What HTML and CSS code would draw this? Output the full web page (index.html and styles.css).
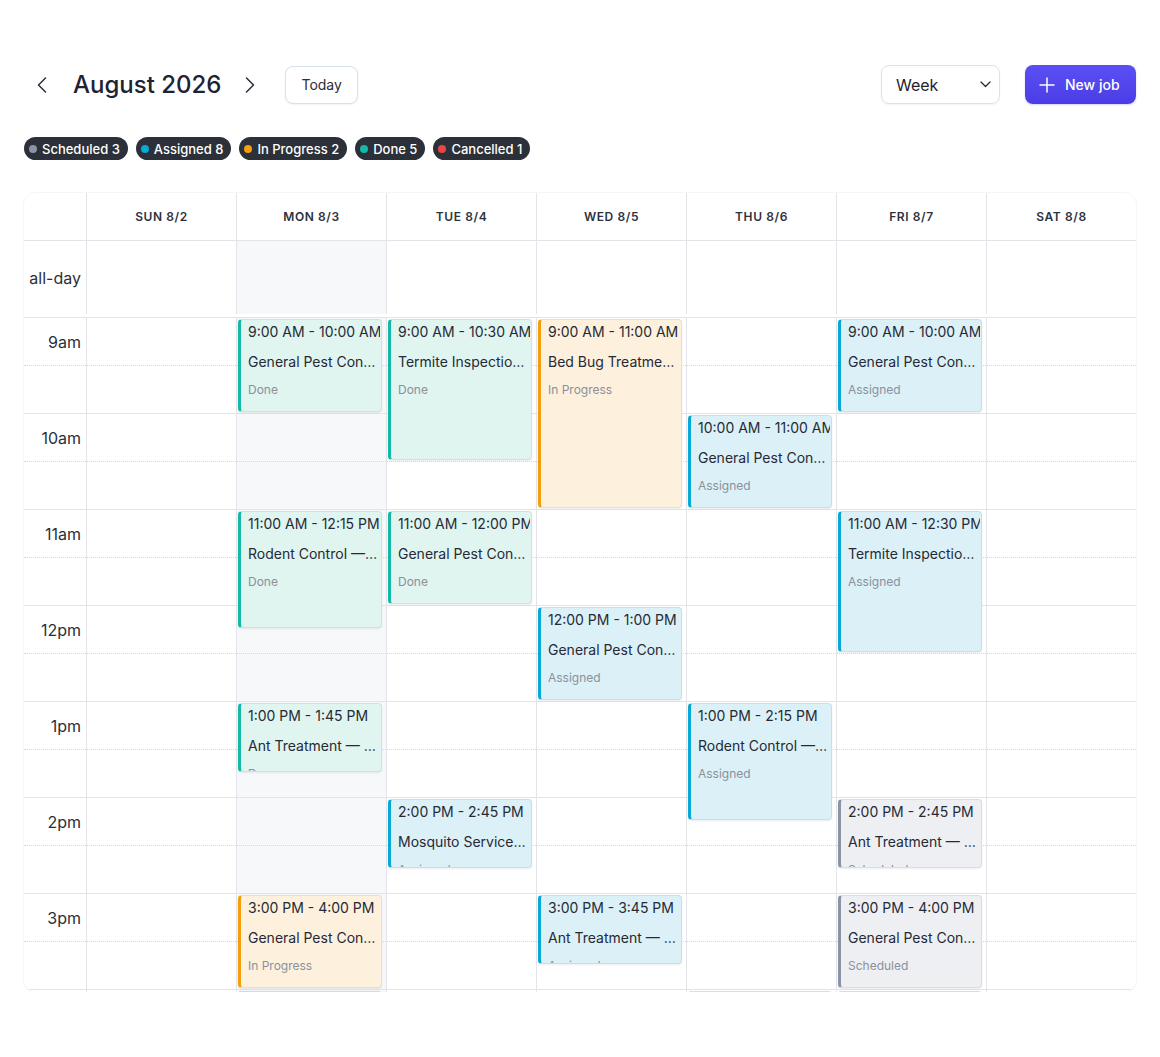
FILE: index.html
```html
<!DOCTYPE html>
<html lang="en">
<head>
  <meta charset="UTF-8" />
  <meta name="viewport" content="width=device-width, initial-scale=1.0"/>
  <title>Jobs Calendar</title>
  <link rel="stylesheet" href="styles.css">
</head>
<body>
  <div class="page">
    <div class="toolbar">
      <div class="nav">
        <button class="icon-btn prev" aria-label="Previous week">
          <svg width="16" height="16" viewBox="0 0 16 16"><path d="M10.5 1 L3.5 8 L10.5 15" fill="none" stroke="currentColor" stroke-width="1.5" stroke-linecap="round" stroke-linejoin="round"/></svg>
        </button>
        <h1 class="title">August 2026</h1>
        <button class="icon-btn next" aria-label="Next week">
          <svg width="16" height="16" viewBox="0 0 16 16"><path d="M5.5 1 L12.5 8 L5.5 15" fill="none" stroke="currentColor" stroke-width="1.5" stroke-linecap="round" stroke-linejoin="round"/></svg>
        </button>
        <button class="today-btn">Today</button>
      </div>
      <div class="actions">
        <div class="view-select">
          <span>Week</span>
          <svg width="11" height="7" viewBox="0 0 11 7"><path d="M1 1 L5.5 5.5 L10 1" fill="none" stroke="currentColor" stroke-width="1.2" stroke-linecap="round" stroke-linejoin="round"/></svg>
        </div>
        <button class="new-job">
          <svg width="16" height="16" viewBox="0 0 16 16"><path d="M8 1 V15 M1 8 H15" fill="none" stroke="currentColor" stroke-width="1.5" stroke-linecap="round"/></svg>
          New job
        </button>
      </div>
    </div>

    <div class="legend">
      <span class="chip"><span class="dot scheduled"></span>Scheduled 3</span>
      <span class="chip"><span class="dot assigned"></span>Assigned 8</span>
      <span class="chip"><span class="dot progress"></span>In Progress 2</span>
      <span class="chip"><span class="dot done"></span>Done 5</span>
      <span class="chip"><span class="dot cancelled"></span>Cancelled 1</span>
    </div>

    <div class="calendar">
      <div class="cal-row cal-head">
        <div class="axis"></div>
        <div class="day-head">Sun 8/2</div>
        <div class="day-head">Mon 8/3</div>
        <div class="day-head">Tue 8/4</div>
        <div class="day-head">Wed 8/5</div>
        <div class="day-head">Thu 8/6</div>
        <div class="day-head">Fri 8/7</div>
        <div class="day-head">Sat 8/8</div>
      </div>
      <div class="cal-row allday-row">
        <div class="axis allday-label">all-day</div>
        <div class="allday-cell"></div>
        <div class="allday-cell today"></div>
        <div class="allday-cell"></div>
        <div class="allday-cell"></div>
        <div class="allday-cell"></div>
        <div class="allday-cell"></div>
        <div class="allday-cell"></div>
      </div>
      <div class="divider"></div>
      <div class="time-body">
        <div class="cal-row time-grid" id="time-grid"></div>
      </div>
    </div>
  </div>

  <script>
const hourLabels = ['9am', '10am', '11am', '12pm', '1pm', '2pm', '3pm', '4pm', '5pm'];
const firstHour = 9;
const pxPerMin = 96 / 60;
const todayIndex = 1;

const statusNames = {
  scheduled: 'Scheduled',
  assigned: 'Assigned',
  progress: 'In Progress',
  done: 'Done',
  cancelled: 'Cancelled'
};

const jobs = [
  { day: 1, start: '9:00', end: '10:00', title: 'General Pest Control — Miller', status: 'done' },
  { day: 1, start: '11:00', end: '12:15', title: 'Rodent Control — Harris', status: 'done' },
  { day: 1, start: '13:00', end: '13:45', title: 'Ant Treatment — Lopez', status: 'done' },
  { day: 1, start: '15:00', end: '16:00', title: 'General Pest Control — Carter', status: 'progress' },
  { day: 1, start: '16:00', end: '17:00', title: 'Wasp Nest Removal — Brooks', status: 'assigned' },
  { day: 2, start: '9:00', end: '10:30', title: 'Termite Inspection — Nguyen', status: 'done' },
  { day: 2, start: '11:00', end: '12:00', title: 'General Pest Control — Patel', status: 'done' },
  { day: 2, start: '14:00', end: '14:45', title: 'Mosquito Services — Reed', status: 'assigned' },
  { day: 3, start: '9:00', end: '11:00', title: 'Bed Bug Treatment — Kim', status: 'progress' },
  { day: 3, start: '12:00', end: '13:00', title: 'General Pest Control — Evans', status: 'assigned' },
  { day: 3, start: '15:00', end: '15:45', title: 'Ant Treatment — Foster', status: 'assigned' },
  { day: 4, start: '10:00', end: '11:00', title: 'General Pest Control — Ward', status: 'assigned' },
  { day: 4, start: '13:00', end: '14:15', title: 'Rodent Control — Bennett', status: 'assigned' },
  { day: 4, start: '16:00', end: '17:00', title: 'Termite Inspection — Hayes', status: 'scheduled' },
  { day: 5, start: '9:00', end: '10:00', title: 'General Pest Control — Price', status: 'assigned' },
  { day: 5, start: '11:00', end: '12:30', title: 'Termite Inspection — Rivera', status: 'assigned' },
  { day: 5, start: '14:00', end: '14:45', title: 'Ant Treatment — Cooper', status: 'scheduled' },
  { day: 5, start: '15:00', end: '16:00', title: 'General Pest Control — Gray', status: 'scheduled' },
  { day: 5, start: '16:00', end: '17:00', title: 'Spider Treatment — Morris', status: 'cancelled' }
];

function toMinutes(t) {
  const [h, m] = t.split(':').map(Number);
  return h * 60 + m;
}

function formatTime(t) {
  const [h, m] = t.split(':').map(Number);
  const suffix = h >= 12 ? 'PM' : 'AM';
  const h12 = h % 12 === 0 ? 12 : h % 12;
  return `${h12}:${String(m).padStart(2, '0')} ${suffix}`;
}

function hourCell(label) {
  const cell = document.createElement('div');
  cell.className = 'hour';
  if (label) {
    const span = document.createElement('span');
    span.className = 'hour-label';
    span.textContent = label;
    cell.appendChild(span);
  }
  return cell;
}

const grid = document.getElementById('time-grid');

const axisCol = document.createElement('div');
axisCol.className = 'axis-col';
hourLabels.forEach(label => axisCol.appendChild(hourCell(label)));
grid.appendChild(axisCol);

const dayCols = [];
for (let d = 0; d < 7; d++) {
  const col = document.createElement('div');
  col.className = 'day-col' + (d === todayIndex ? ' today' : '');
  hourLabels.forEach(() => col.appendChild(hourCell()));
  grid.appendChild(col);
  dayCols.push(col);
}

jobs.forEach(job => {
  const start = toMinutes(job.start);
  const end = toMinutes(job.end);
  const el = document.createElement('div');
  el.className = `event ${job.status}`;
  el.style.top = `${(start - firstHour * 60) * pxPerMin + 1}px`;
  el.style.height = `${(end - start) * pxPerMin - 3}px`;
  el.innerHTML = `
    <div class="event-time">${formatTime(job.start)} - ${formatTime(job.end)}</div>
    <div class="event-title">${job.title}</div>
    <div class="event-status">${statusNames[job.status]}</div>`;
  dayCols[job.day].appendChild(el);
});
  </script>
</body>
</html>
```

FILE: styles.css
```css
* {
  box-sizing: border-box;
}

body {
  margin: 0;
  font-family: Inter, 'Noto Sans', sans-serif;
  color: #1f2330;
  background: #fff;
}

.page {
  padding: 65px 24px 0;
}

/* toolbar */

.toolbar {
  display: flex;
  justify-content: space-between;
  align-items: center;
  height: 39px;
}

.nav,
.actions {
  display: flex;
  align-items: center;
}

button {
  font-family: inherit;
  cursor: pointer;
}

.icon-btn {
  width: 32px;
  height: 32px;
  padding: 0;
  border: none;
  background: none;
  color: #2a2e39;
  display: flex;
  align-items: center;
  justify-content: center;
}

.icon-btn.prev {
  margin-left: 3px;
}

.icon-btn.next {
  margin-left: 12px;
}

.title {
  margin: 0 0 0 14px;
  font-size: 24px;
  font-weight: 500;
  color: #1e2232;
}

.today-btn {
  margin-left: 20px;
  height: 38px;
  padding: 0 15px;
  background: #fff;
  border: 1px solid #d8e0ea;
  border-radius: 8px;
  font-size: 14px;
  color: #2a2e39;
  box-shadow: 0 1px 2px rgba(16, 24, 40, 0.05);
}

.view-select {
  width: 119px;
  height: 39px;
  padding: 0 8px 0 14px;
  display: flex;
  align-items: center;
  justify-content: space-between;
  border: 1px solid #dfe1e7;
  border-radius: 8px;
  font-size: 16px;
  color: #1f2330;
  box-shadow: 0 1px 2px rgba(16, 24, 40, 0.05);
}

.new-job {
  margin-left: 25px;
  width: 111px;
  height: 39px;
  padding: 0 0 0 14px;
  display: flex;
  align-items: center;
  gap: 10px;
  border: none;
  border-radius: 8px;
  background: linear-gradient(#5a4ff4, #4b3de6);
  color: #fff;
  font-size: 14px;
  font-weight: 500;
  box-shadow: 0 1px 2px rgba(79, 70, 229, 0.25);
}

/* status legend */

.legend {
  display: flex;
  gap: 8px;
  margin-top: 33px;
}

.chip {
  display: inline-flex;
  align-items: center;
  gap: 5px;
  height: 23px;
  padding: 0 8px 0 5px;
  border-radius: 12px;
  background: #2c3038;
  color: #fff;
  font-size: 13px;
  font-weight: 500;
}

.dot {
  width: 8px;
  height: 8px;
  border-radius: 50%;
}

.dot.scheduled { background: #8b93a7; }
.dot.assigned { background: #06a9d6; }
.dot.progress { background: #f59e0b; }
.dot.done { background: #14b8a6; }
.dot.cancelled { background: #ef4444; }

/* calendar */

.calendar {
  margin-top: 33px;
  border-radius: 12px;
  overflow: hidden;
  box-shadow: 0 0 0 1px #f5f6f8, 0 1px 2px rgba(16, 24, 40, 0.03);
}

.cal-row {
  display: grid;
  grid-template-columns: 62px repeat(7, 1fr);
}

.cal-head {
  height: 48px;
  border-bottom: 1px solid #e2e4e9;
}

.day-head {
  display: flex;
  align-items: center;
  justify-content: center;
  border-left: 1px solid #e2e4e9;
  font-size: 12px;
  font-weight: 600;
  letter-spacing: 0.6px;
  text-transform: uppercase;
  color: #2d3240;
}

.allday-row {
  height: 73px;
}

.allday-label {
  display: flex;
  align-items: center;
  justify-content: flex-end;
  padding-right: 5px;
  font-size: 16px;
  color: #2b2f3a;
}

.allday-cell {
  border-left: 1px solid #e2e4e9;
}

.today {
  background: #f7f8fa;
}

.divider {
  height: 4px;
  border-bottom: 1px solid #e2e4e9;
}

.time-body {
  height: 674px;
  overflow: hidden;
}

.hour {
  position: relative;
  height: 96px;
  border-bottom: 1px solid #e2e4e9;
}

/* half-hour line */
.hour::after {
  content: '';
  position: absolute;
  left: 0;
  right: 0;
  top: 47px;
  border-top: 1px dotted #d6d8de;
}

.hour-label {
  display: block;
  padding: 14px 5px 0 0;
  text-align: right;
  font-size: 16px;
  line-height: 20px;
  color: #2b2f3a;
}

.day-col {
  position: relative;
  border-left: 1px solid #e2e4e9;
}

/* events */

.event {
  position: absolute;
  z-index: 1;
  left: 1px;
  right: 4px;
  padding: 2px 1px 0 7px;
  border: 1px solid rgba(15, 23, 42, 0.08);
  border-left: 3px solid;
  border-radius: 4px;
  box-shadow: 0 1px 2px rgba(16, 24, 40, 0.08);
  overflow: hidden;
}

.event.done { background: #e0f4f0; border-left-color: #14b8a6; }
.event.assigned { background: #dcf0f7; border-left-color: #06a9d6; }
.event.progress { background: #fdf0dd; border-left-color: #f59e0b; }
.event.scheduled { background: #eeeff2; border-left-color: #8b93a7; }
.event.cancelled { background: #fde8e8; border-left-color: #ef4444; }

.event-time {
  font-size: 14px;
  line-height: 20px;
  white-space: nowrap;
  overflow: hidden;
  color: #262a35;
}

.event-title {
  margin-top: 10px;
  font-size: 14px;
  line-height: 20px;
  white-space: nowrap;
  overflow: hidden;
  text-overflow: ellipsis;
  color: #262a35;
}

.event-status {
  margin-top: 10px;
  font-size: 12px;
  line-height: 16px;
  color: #8b909b;
}
```
